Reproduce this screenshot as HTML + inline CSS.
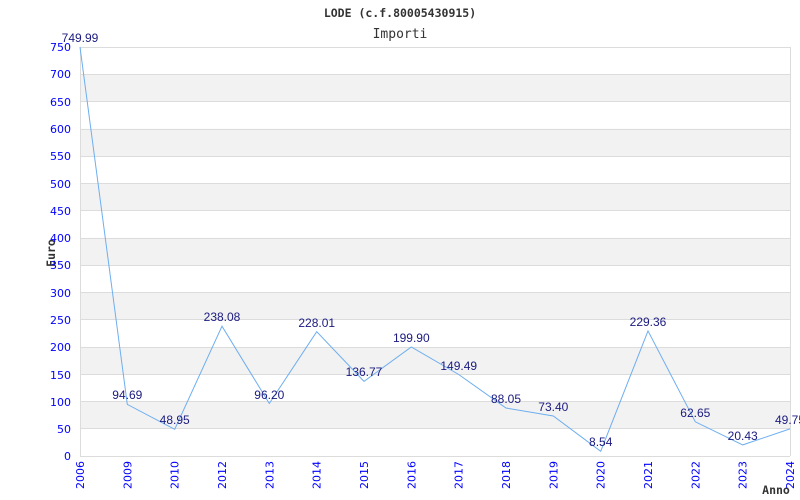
<!DOCTYPE html>
<html><head><meta charset="utf-8"><style>
html,body{margin:0;padding:0;background:#fff;}
svg{display:block;}
</style></head><body>
<svg width="800" height="500" viewBox="0 0 800 500" xmlns="http://www.w3.org/2000/svg">
<rect width="800" height="500" fill="#fff"/>
<g fill="#f2f2f2">
<rect x="80" y="74.3" width="710" height="27.3"/>
<rect x="80" y="128.8" width="710" height="27.3"/>
<rect x="80" y="183.3" width="710" height="27.3"/>
<rect x="80" y="237.9" width="710" height="27.3"/>
<rect x="80" y="292.4" width="710" height="27.3"/>
<rect x="80" y="347.0" width="710" height="27.3"/>
<rect x="80" y="401.5" width="710" height="27.3"/>
</g>
<g stroke="#dcdcdc" stroke-width="1">
<line x1="80" x2="790" y1="47.5" y2="47.5"/>
<line x1="80" x2="790" y1="74.5" y2="74.5"/>
<line x1="80" x2="790" y1="101.5" y2="101.5"/>
<line x1="80" x2="790" y1="129.5" y2="129.5"/>
<line x1="80" x2="790" y1="156.5" y2="156.5"/>
<line x1="80" x2="790" y1="183.5" y2="183.5"/>
<line x1="80" x2="790" y1="210.5" y2="210.5"/>
<line x1="80" x2="790" y1="238.5" y2="238.5"/>
<line x1="80" x2="790" y1="265.5" y2="265.5"/>
<line x1="80" x2="790" y1="292.5" y2="292.5"/>
<line x1="80" x2="790" y1="319.5" y2="319.5"/>
<line x1="80" x2="790" y1="347.5" y2="347.5"/>
<line x1="80" x2="790" y1="374.5" y2="374.5"/>
<line x1="80" x2="790" y1="401.5" y2="401.5"/>
<line x1="80" x2="790" y1="428.5" y2="428.5"/>
<line x1="80" x2="790" y1="456.5" y2="456.5"/>
<line x1="80.5" x2="80.5" y1="47" y2="456"/>
<line x1="790.5" x2="790.5" y1="47" y2="456"/>
</g>
<g font-family="'DejaVu Sans Mono','Liberation Mono',monospace" fill="#333" text-anchor="middle">
<text x="400" y="17" font-size="11.5" font-weight="bold">LODE (c.f.80005430915)</text>
<text x="400" y="38" font-size="13">Importi</text>
<text x="776" y="494" font-size="11.5" font-weight="bold">Anno</text>
<text transform="translate(55,253) rotate(-90)" font-size="11.5" font-weight="bold">Euro</text>
</g>
<g font-family="'DejaVu Sans','Liberation Sans',sans-serif" font-size="11" fill="#0000ff" text-anchor="end">
<text x="71" y="51">750</text><text x="71" y="78">700</text><text x="71" y="106">650</text>
<text x="71" y="133">600</text><text x="71" y="160">550</text><text x="71" y="188">500</text>
<text x="71" y="215">450</text><text x="71" y="242">400</text><text x="71" y="269">350</text>
<text x="71" y="297">300</text><text x="71" y="324">250</text><text x="71" y="351">200</text>
<text x="71" y="379">150</text><text x="71" y="406">100</text><text x="71" y="433">50</text>
<text x="71" y="460">0</text>
</g>
<g font-family="'DejaVu Sans','Liberation Sans',sans-serif" font-size="11" fill="#0000ff" text-anchor="end">
<text transform="translate(84,461) rotate(-90)">2006</text>
<text transform="translate(131.3,461) rotate(-90)">2009</text>
<text transform="translate(178.7,461) rotate(-90)">2010</text>
<text transform="translate(226,461) rotate(-90)">2012</text>
<text transform="translate(273.3,461) rotate(-90)">2013</text>
<text transform="translate(320.7,461) rotate(-90)">2014</text>
<text transform="translate(368,461) rotate(-90)">2015</text>
<text transform="translate(415.3,461) rotate(-90)">2016</text>
<text transform="translate(462.7,461) rotate(-90)">2017</text>
<text transform="translate(510,461) rotate(-90)">2018</text>
<text transform="translate(557.3,461) rotate(-90)">2019</text>
<text transform="translate(604.7,461) rotate(-90)">2020</text>
<text transform="translate(652,461) rotate(-90)">2021</text>
<text transform="translate(699.3,461) rotate(-90)">2022</text>
<text transform="translate(746.7,461) rotate(-90)">2023</text>
<text transform="translate(794,461) rotate(-90)">2024</text>
</g>
<polyline fill="none" stroke="#6eaef0" stroke-width="1" points="80,47 127.3,404.4 174.7,429.3 222,326.2 269.3,403.5 316.7,331.7 364,381.4 411.3,347 458.7,374.5 506,408 553.3,416 600.7,451.3 648,330.9 695.3,421.8 742.7,444.9 790,428.9"/>
<g font-family="'Liberation Sans',sans-serif" font-size="12" fill="#1a1a80" text-anchor="middle">
<text x="80" y="42">749.99</text>
<text x="127.3" y="399">94.69</text>
<text x="174.7" y="424">48.95</text>
<text x="222" y="321">238.08</text>
<text x="269.3" y="399">96.20</text>
<text x="316.7" y="327">228.01</text>
<text x="364" y="376">136.77</text>
<text x="411.3" y="342">199.90</text>
<text x="458.7" y="370">149.49</text>
<text x="506" y="403">88.05</text>
<text x="553.3" y="411">73.40</text>
<text x="600.7" y="446">8.54</text>
<text x="648" y="326">229.36</text>
<text x="695.3" y="417">62.65</text>
<text x="742.7" y="440">20.43</text>
<text x="790" y="424">49.75</text>
</g>
</svg>
</body></html>
